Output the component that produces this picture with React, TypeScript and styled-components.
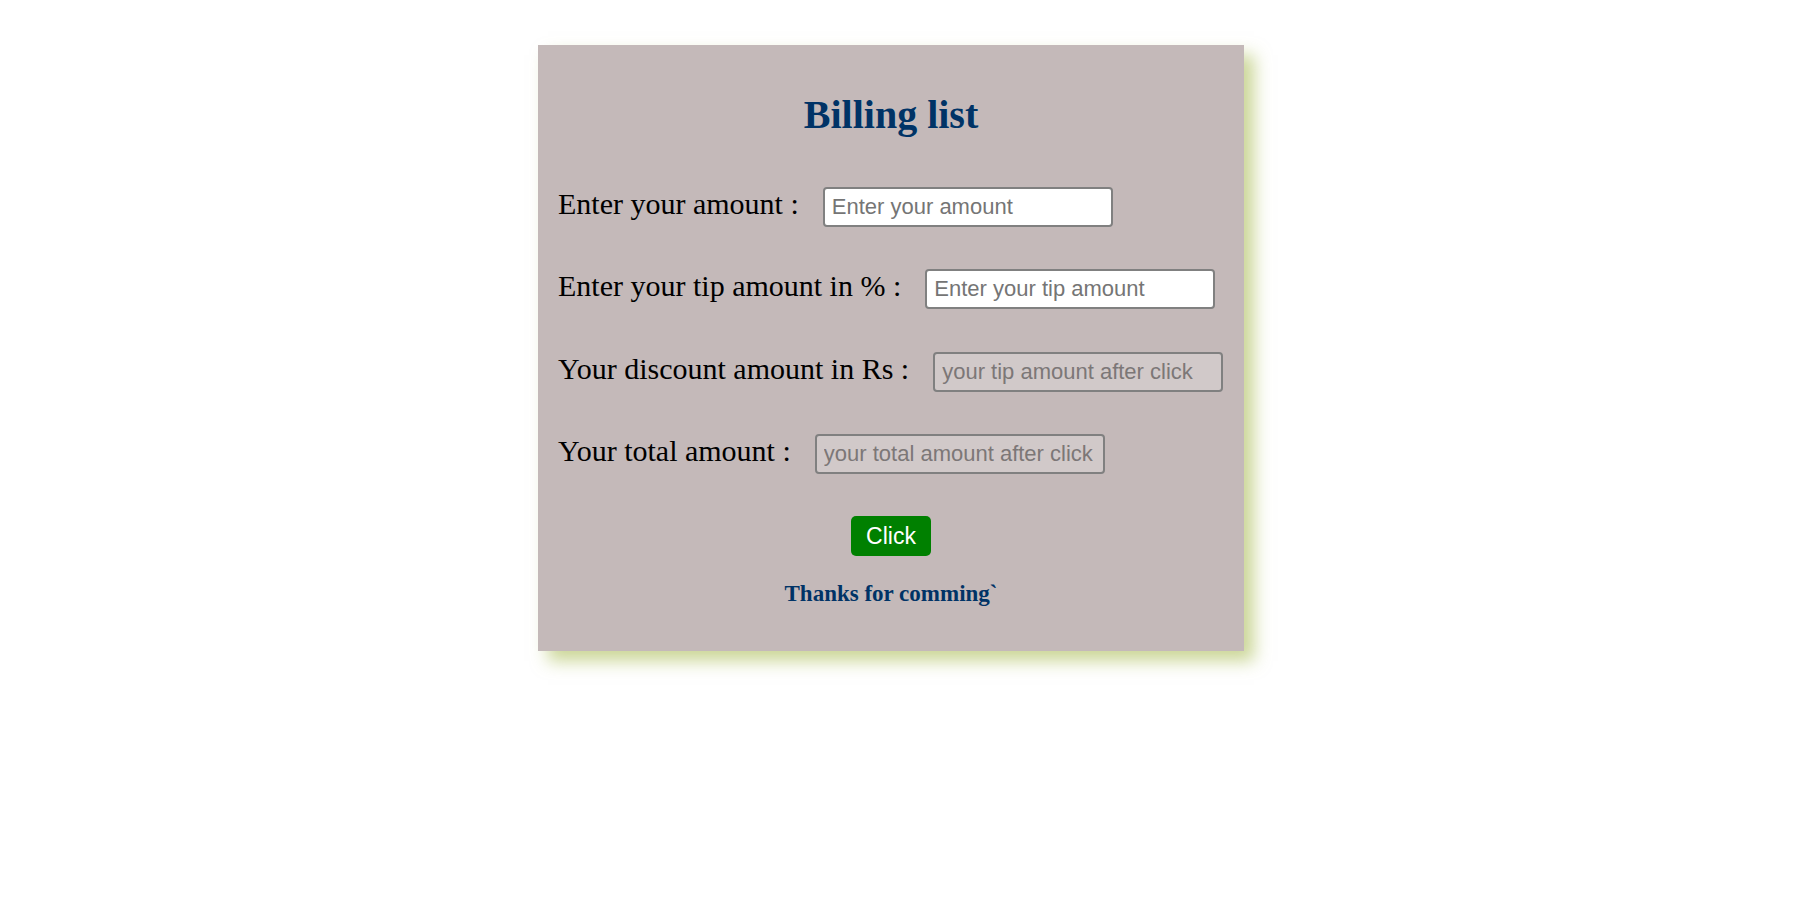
import React from "react";
import styled, { createGlobalStyle } from "styled-components";

const GlobalStyle = createGlobalStyle`
  html, body {
    margin: 0;
    padding: 0;
    background: #ffffff;
  }
  body {
    font-family: "Liberation Serif", "Times New Roman", serif;
  }
`;

const Page = styled.div`
  display: flex;
  justify-content: flex-start;
  padding: 45px 0 0 538px;
  min-height: 903px;
  box-sizing: border-box;
`;

const Card = styled.div`
  width: 706px;
  height: 606px;
  box-sizing: border-box;
  padding: 20px;
  background: #c4b9b9;
  box-shadow: 10px 10px 16px rgba(175, 192, 95, 0.65);
  display: flex;
  flex-direction: column;
`;

const Title = styled.h1`
  margin: 26.8px 0 49.2px;
  font-family: "Liberation Serif", "Times New Roman", serif;
  font-size: 40px;
  font-weight: bold;
  line-height: 46px;
  color: #003366;
  text-align: center;
`;

const Rows = styled.div`
  display: flex;
  flex-direction: column;
  gap: 42.5px;
`;

const Row = styled.div`
  display: flex;
  align-items: baseline;
  gap: 24px;
  height: 40px;
`;

const Label = styled.label`
  font-family: "Liberation Serif", "Times New Roman", serif;
  font-size: 30px;
  color: #000000;
  white-space: nowrap;
`;

const Field = styled.input`
  width: 290px;
  height: 40px;
  box-sizing: border-box;
  padding: 0 4px 0 7px;
  border: 2px solid #808080;
  border-radius: 4px;
  font-family: "Liberation Sans", Arial, sans-serif;
  font-size: 22px;
  color: #000000;
  background: ${(p) => (p.disabled ? "rgba(239, 239, 239, 0.3)" : "#ffffff")};
  outline: none;
  &::placeholder {
    color: ${(p) => (p.disabled ? "#7c7777" : "#757575")};
    opacity: 1;
  }
`;

const Button = styled.button`
  align-self: center;
  margin-top: 41.5px;
  width: 80px;
  height: 40px;
  border: none;
  border-radius: 5px;
  background: #008000;
  color: #ffffff;
  font-family: "Liberation Sans", Arial, sans-serif;
  font-size: 23px;
  padding: 2px 0 0;
  cursor: pointer;
`;

const Thanks = styled.h3`
  margin: 25px 0 0;
  font-family: "Liberation Serif", "Times New Roman", serif;
  font-size: 23px;
  font-weight: bold;
  line-height: 26px;
  color: #003366;
  text-align: center;
`;

const fields = [
  { label: "Enter your amount :", placeholder: "Enter your amount", disabled: false },
  { label: "Enter your tip amount in % :", placeholder: "Enter your tip amount", disabled: false },
  { label: "Your discount amount in Rs :", placeholder: "your tip amount after click", disabled: true },
  { label: "Your total amount :", placeholder: "your total amount after click", disabled: true },
];

export default function App() {
  return (
    <>
      <GlobalStyle />
      <Page>
        <Card>
          <Title>Billing list</Title>
          <Rows>
            {fields.map((f) => (
              <Row key={f.label}>
                <Label>{f.label}</Label>
                <Field type="text" placeholder={f.placeholder} disabled={f.disabled} />
              </Row>
            ))}
          </Rows>
          <Button>Click</Button>
          <Thanks>Thanks for comming`</Thanks>
        </Card>
      </Page>
    </>
  );
}
